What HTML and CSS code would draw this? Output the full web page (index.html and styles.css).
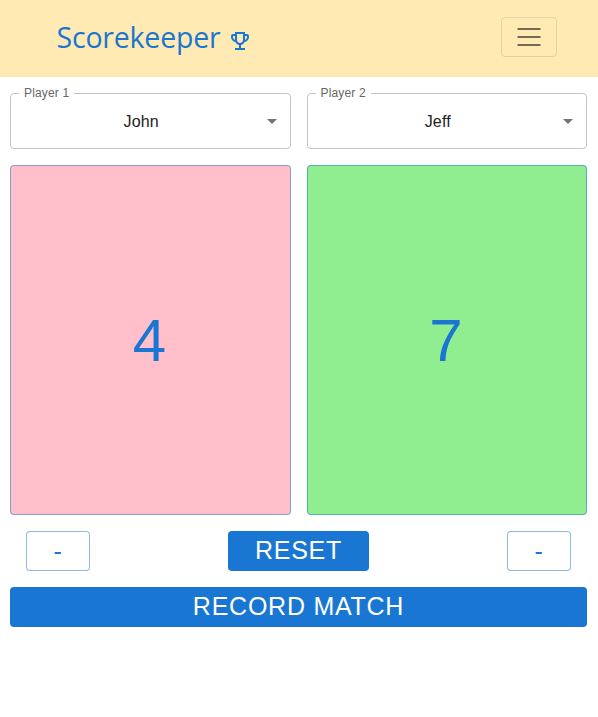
FILE: index.html
```html
<!DOCTYPE html>
<html lang="en">
<head>
<meta charset="utf-8">
<title>Scorekeeper</title>
<link rel="stylesheet" href="styles.css">
</head>
<body>
<nav class="navbar">
  <a class="brand"><span class="brand-name">Scorekeeper</span>
    <svg class="trophy" viewBox="0 0 24 24"><path d="M19 5h-2V3H7v2H5c-1.100 0-2 .9-2 2v1c0 2.550 1.920 4.630 4.390 4.940.63 1.500 1.980 2.630 3.610 2.960V19H7v2h10v-2h-4v-3.100c1.630-.33 2.980-1.460 3.610-2.960C19.080 12.630 21 10.550 21 8V7c0-1.100-.9-2-2-2zM5 8V7h2v3.820C5.840 10.400 5 9.300 5 8zm7 6c-1.650 0-3-1.350-3-3V5h6v6c0 1.650-1.350 3-3 3zm7-6c0 1.300-.84 2.400-2 2.820V7h2v1z"/></svg>
  </a>
  <button class="toggler" aria-label="Menu"><svg viewBox="0 0 30 30"><path d="M3.500 7h23M3.500 15h23M3.500 23h23"/></svg></button>
</nav>
<main class="board">
  <div class="row">
    <fieldset class="select">
      <legend>Player 1</legend>
      <span class="value">John</span>
      <svg class="arrow" viewBox="0 0 24 24"><path d="M7 10l5 5 5-5z"/></svg>
    </fieldset>
    <fieldset class="select">
      <legend>Player 2</legend>
      <span class="value">Jeff</span>
      <svg class="arrow" viewBox="0 0 24 24"><path d="M7 10l5 5 5-5z"/></svg>
    </fieldset>
  </div>
  <div class="row scores">
    <button class="score pink">4</button>
    <button class="score green">7</button>
  </div>
  <div class="controls">
    <button class="btn minus">-</button>
    <button class="btn filled reset">RESET</button>
    <button class="btn minus">-</button>
  </div>
  <button class="btn filled record">RECORD MATCH</button>
</main>
</body>
</html>
```
FILE: styles.css
```css
* { box-sizing: border-box; }
body { margin: 0; background: #fff; font-family: "Liberation Sans", Arial, sans-serif; }
button { margin: 0; padding: 0; font-family: inherit; }
.navbar {
  display: flex; align-items: center; justify-content: space-between;
  height: 77px; padding: 0 41px 3px 57px; background: #ffeab3;
}
.brand { display: flex; align-items: center; gap: 8px; color: #1976d2; }
.brand-name { width: 163px; font: 400 28.500px/40px "Open Sans", sans-serif; letter-spacing: -.2px; text-indent: -.5px; white-space: nowrap; }
.trophy { width: 24px; height: 24px; margin-top: 8px; fill: #1976d2; }
.toggler {
  display: flex; align-items: center; justify-content: center;
  width: 56px; height: 40px; border: 1px solid rgba(0, 0, 0, .1); border-radius: 4px; background: none;
}
.toggler svg { width: 30px; height: 30px; fill: none; stroke: rgba(0, 0, 0, .55); stroke-width: 2; }
.board { padding: 10px 11px 0 10px; }
.row { display: grid; grid-template-columns: 1fr 1fr; gap: 16px; }
.select {
  display: flex; align-items: center; min-width: 0; height: 62px; margin: 0;
  padding: 0 6px 6px 8px; border: 1px solid #c4c4c4; border-radius: 4px;
}
.select legend { height: 12px; padding: 0 5px; font-size: 12px; line-height: 12px; letter-spacing: .15px; color: #666; }
.value { flex: 1; padding: 2px 0 0 4px; text-align: center; font-size: 16px; letter-spacing: .15px; color: #212121; }
.arrow { width: 24px; height: 24px; fill: #757575; }
.scores { margin-top: 16px; }
.score {
  height: 350px; border: 1px solid rgba(25, 118, 210, .5); border-radius: 4px;
  color: #1976d2; font-size: 60px; letter-spacing: 1.700px;
}
.pink { background: pink; }
.green { background: lightgreen; }
.controls { display: flex; justify-content: space-between; padding: 16px; }
.btn { height: 40px; padding-bottom: 2px; border-radius: 4px; font-size: 25px; line-height: 38px; letter-spacing: .75px; }
.minus { width: 64px; border: 1px solid rgba(25, 118, 210, .5); background: #fff; color: #1976d2; }
.filled { border: 0; background: #1976d2; color: #fff; }
.reset { width: 141px; }
.record { display: block; width: 100%; }
```
